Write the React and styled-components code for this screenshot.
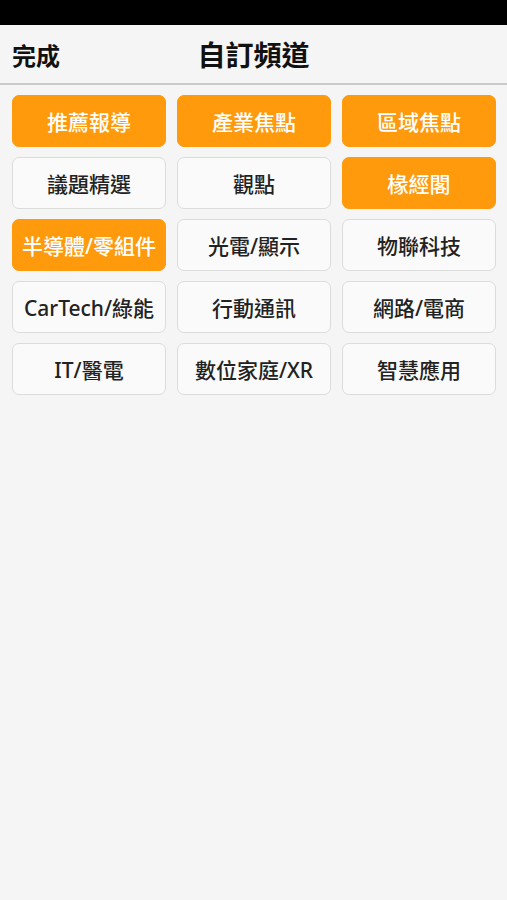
import React from "react";
import styled, { createGlobalStyle } from "styled-components";

const GlobalStyle = createGlobalStyle`
  html, body {
    margin: 0;
    padding: 0;
    background: #f5f5f5;
    font-family: "Noto Sans", "Noto Sans CJK TC", sans-serif;
  }
`;

const Page = styled.div`
  width: 507px;
  min-height: 900px;
  background: #f5f5f5;
`;

const StatusBar = styled.div`
  height: 25px;
  background: #000;
`;

const Header = styled.div`
  position: relative;
  height: 58px;
  display: flex;
  align-items: center;
  justify-content: center;
  border-bottom: 2px solid #c9c9c9;
  background: #f5f5f5;
`;

const DoneButton = styled.div`
  position: absolute;
  left: 12px;
  top: 50%;
  transform: translateY(-50%);
  font-size: 24px;
  font-weight: 700;
  color: #111;
`;

const Title = styled.div`
  font-size: 28px;
  font-weight: 700;
  color: #111;
`;

const Grid = styled.div`
  display: grid;
  grid-template-columns: repeat(3, 154px);
  grid-auto-rows: 52px;
  column-gap: 11px;
  row-gap: 10px;
  padding: 10px 12px;
`;

const Channel = styled.div`
  display: flex;
  align-items: center;
  justify-content: center;
  border-radius: 7px;
  font-size: 21px;
  font-weight: 500;
  box-sizing: border-box;
  background: ${p => (p.selected ? "#ff9a0d" : "#fafafa")};
  color: ${p => (p.selected ? "#fff" : "#222")};
  border: 1px solid ${p => (p.selected ? "#ff9a0d" : "#dcdcdc")};
`;

const channels = [
  { name: "推薦報導", selected: true },
  { name: "產業焦點", selected: true },
  { name: "區域焦點", selected: true },
  { name: "議題精選" },
  { name: "觀點" },
  { name: "椽經閣", selected: true },
  { name: "半導體/零組件", selected: true },
  { name: "光電/顯示" },
  { name: "物聯科技" },
  { name: "CarTech/綠能" },
  { name: "行動通訊" },
  { name: "網路/電商" },
  { name: "IT/醫電" },
  { name: "數位家庭/XR" },
  { name: "智慧應用" },
];

export default function App() {
  return (
    <Page>
      <GlobalStyle />
      <StatusBar />
      <Header>
        <DoneButton>完成</DoneButton>
        <Title>自訂頻道</Title>
      </Header>
      <Grid>
        {channels.map(c => (
          <Channel key={c.name} selected={c.selected}>
            {c.name}
          </Channel>
        ))}
      </Grid>
    </Page>
  );
}
